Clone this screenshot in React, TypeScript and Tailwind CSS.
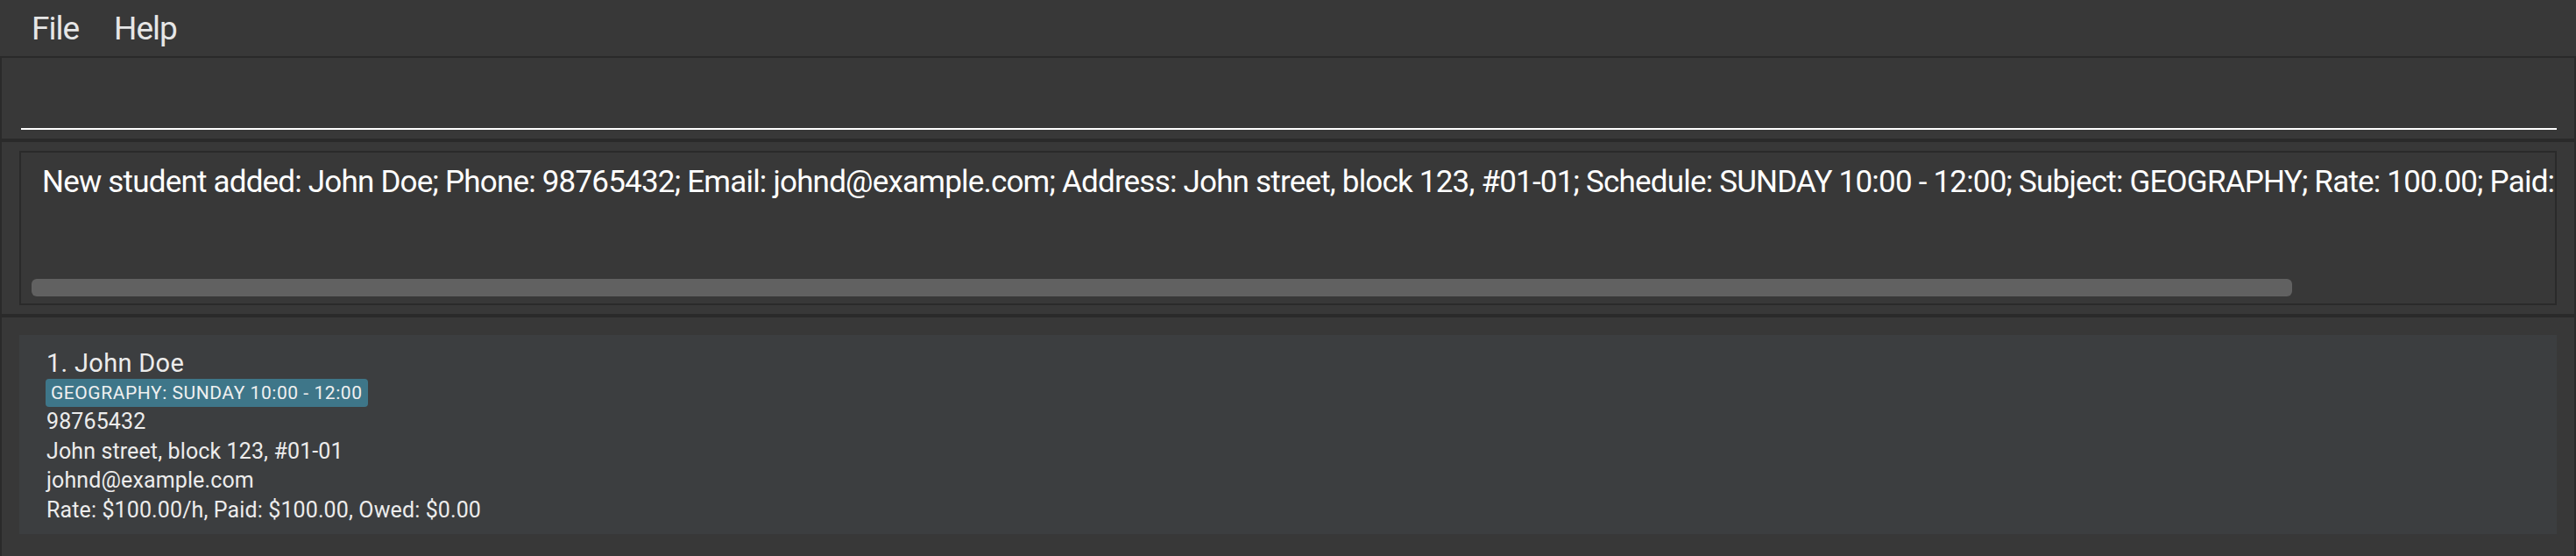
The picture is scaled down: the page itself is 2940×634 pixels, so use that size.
import { type ReactNode } from 'react';

const resultText =
  'New student added: John Doe; Phone: 98765432; Email: johnd@example.com; Address: John street, block 123, #01-01; Schedule: SUNDAY 10:00 - 12:00; Subject: GEOGRAPHY; Rate: 100.00; Paid: 100.00; Owed: 0.00';

const student = {
  name: 'John Doe',
  lesson: 'GEOGRAPHY: SUNDAY 10:00 - 12:00',
  phone: '98765432',
  address: 'John street, block 123, #01-01',
  email: 'johnd@example.com',
  money: 'Rate: $100.00/h, Paid: $100.00, Owed: $0.00',
};

function Panel({ children, className = '' }: { children: ReactNode; className?: string }) {
  return <div className={`border-x-2 border-[#2a2a2a] bg-[#383838] ${className}`}>{children}</div>;
}

export default function App() {
  return (
    <div className="flex h-[634px] w-[2940px] flex-col overflow-hidden bg-[#383838] font-['Roboto',sans-serif] text-[#f0f0f0]">
      {/* ----- Menu bar ----- */}
      <div className="flex h-[64px] shrink-0 items-center gap-[40px] bg-[#383838] pl-[36px] text-[37px] leading-none tracking-[-1px] text-[#e6e6e6]">
        <span>File</span>
        <span>Help</span>
      </div>

      {/* ----- Command box ----- */}
      <Panel className="h-[96px] shrink-0 border-y-2 pl-[22px] pr-[20px] pt-[80px]">
        <div className="h-[2px] bg-white" />
      </Panel>

      {/* ----- Result display ----- */}
      <Panel className="h-[200px] shrink-0 border-y-2 px-[20px] pt-[10px]">
        <div className="flex h-[176px] flex-col border-2 border-[#2a2a2a] bg-[#383838]">
          <div className="overflow-hidden whitespace-nowrap pl-[24px] pt-[13px] text-[35px] leading-[41px] tracking-[-0.8px] text-white">
            {resultText}
          </div>
          <div className="mt-auto mb-[8px] ml-[12px] h-[20px] w-[2580px] rounded-[6px] bg-[#616161]" />
        </div>
      </Panel>

      {/* ----- Student list ----- */}
      <Panel className="flex-1 border-t-2 px-[20px] pt-[20px]">
        <div className="flex h-[227px] flex-col items-start bg-[#3c3e40] pl-[31px] pt-[15px] text-[#ececec]">
          <div className="text-[29px] leading-[35px] tracking-[0.3px]">1. {student.name}</div>
          <span className="ml-[-1px] rounded-[4px] bg-[#3e7689] px-[6px] py-[3px] text-[21px] leading-[26px] tracking-[0.55px] text-[#f0f0f0]">
            {student.lesson}
          </span>
          <div className="text-[25px] leading-[33.7px] tracking-[0.12px]">
            <div>{student.phone}</div>
            <div>{student.address}</div>
            <div>{student.email}</div>
            <div>{student.money}</div>
          </div>
        </div>
      </Panel>
    </div>
  );
}
